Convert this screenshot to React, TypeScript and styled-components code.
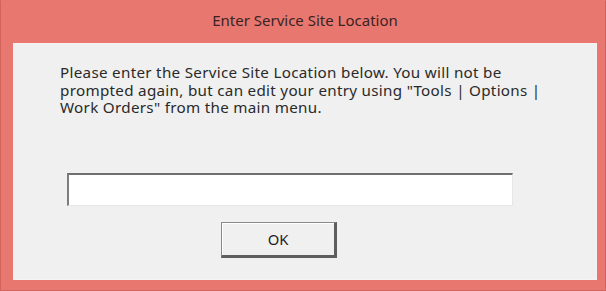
import styled, { createGlobalStyle } from 'styled-components';

const GlobalStyle = createGlobalStyle`
  html, body {
    margin: 0;
    padding: 0;
    background: #e8776f;
  }
`;

const Window = styled.div`
  width: 606px;
  height: 291px;
  box-sizing: border-box;
  background: #e8776f;
  border: 1px solid #d2645d;
  border-top-color: #e8776f;
  padding: 0 8px 10px 12px;
  display: flex;
  flex-direction: column;
  font-family: 'Noto Sans', 'Open Sans', sans-serif;
`;

const TitleBar = styled.div`
  height: 42px;
  display: flex;
  align-items: center;
  justify-content: center;
  padding-bottom: 4px;
  box-sizing: border-box;
  font-size: 15px;
  color: #3b2323;
`;

const Panel = styled.div`
  flex: 1;
  background: #f0f0f0;
  border: 1px solid #f7f3f2;
  display: flex;
  flex-direction: column;
  padding: 20px 0 0 46px;
`;

const Message = styled.p`
  margin: 0;
  width: 500px;
  font-size: 15.2px;
  letter-spacing: 0.3px;
  line-height: 17.5px;
  color: #2a2a2a;
`;

const TextInput = styled.input`
  margin: 56px 0 0 7px;
  width: 446px;
  height: 33px;
  box-sizing: border-box;
  background: #ffffff;
  border-style: solid;
  border-width: 2px 1px 1px 2px;
  border-color: #6f6f6f #e6e6e6 #e6e6e6 #7d7d7d;
  outline: none;
  padding: 0 4px;
  font-family: inherit;
  font-size: 14px;
`;

const ButtonRow = styled.div`
  display: flex;
  padding-left: 161px;
  margin-top: 16px;
`;

const OkButton = styled.button`
  width: 116px;
  height: 36px;
  box-sizing: border-box;
  background: #f0f0f0;
  border-style: solid;
  border-width: 1px 3px 3px 1px;
  border-color: #8a8a8a #5e5e5e #5e5e5e #8a8a8a;
  box-shadow: inset 1px 1px 0 #ffffff;
  font-family: inherit;
  font-size: 14.8px;
  color: #1e1e1e;
  padding: 0;
  cursor: pointer;
`;

export default function App() {
  return (
    <>
      <GlobalStyle />
      <Window>
        <TitleBar>Enter Service Site Location</TitleBar>
        <Panel>
          <Message>
            Please enter the Service Site Location below. You will not be prompted again, but can edit
            your entry using "Tools | Options | Work Orders" from the main menu.
          </Message>
          <TextInput type="text" />
          <ButtonRow>
            <OkButton>OK</OkButton>
          </ButtonRow>
        </Panel>
      </Window>
    </>
  );
}
